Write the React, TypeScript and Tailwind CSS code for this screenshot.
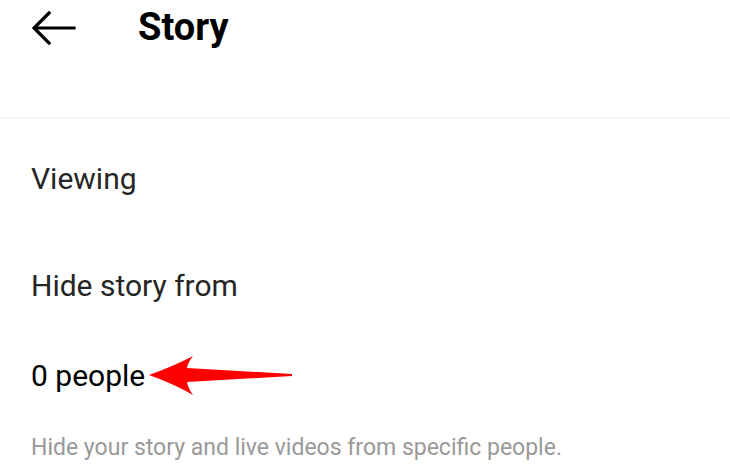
import React from 'react'

function BackArrow() {
  return (
    <svg width="44" height="34" viewBox="0 0 44 34" fill="none">
      <path d="M42 17H3M17 2L2 17l15 15" stroke="#000" strokeWidth="3.2" strokeLinecap="square" />
    </svg>
  )
}

function RedPointer() {
  // annotation arrow drawn over the screenshot
  return (
    <svg className="absolute left-[148px] top-[355px]" width="148" height="42" viewBox="0 0 148 42">
      <path d="M1 20 Q26 11 45 1 Q40 7 39 13 L144 19 L144 21 L39 27 Q40 33 45 40 Q26 29 1 20 Z" fill="#ff0000" />
    </svg>
  )
}

export default function App() {
  return (
    <div className="relative w-[730px] h-[468px] overflow-hidden bg-white" style={{ fontFamily: 'Roboto, "Noto Sans", sans-serif' }}>
      {/* header */}
      <div className="h-[118px] border-b border-[#efefef]">
        <div className="flex items-center pt-[9px] pl-[32px]">
          <BackArrow />
          <h1 className="ml-[62px] text-[38px] leading-[40px] font-bold text-black -mt-[2px]">Story</h1>
        </div>
      </div>

      <div className="px-[31px]">
        <div className="mt-[43px] text-[30px] leading-[36px] text-[#262626]">Viewing</div>
        <div className="mt-[71px] text-[30px] leading-[36px] text-[#262626]">Hide story from</div>
        <div className="mt-[54px] text-[30px] leading-[36px] text-black">0 people</div>
        <p className="mt-[39px] text-[23px] leading-[30px] text-[#999999]">Hide your story and live videos from specific people.</p>
      </div>

      <RedPointer />
    </div>
  )
}
